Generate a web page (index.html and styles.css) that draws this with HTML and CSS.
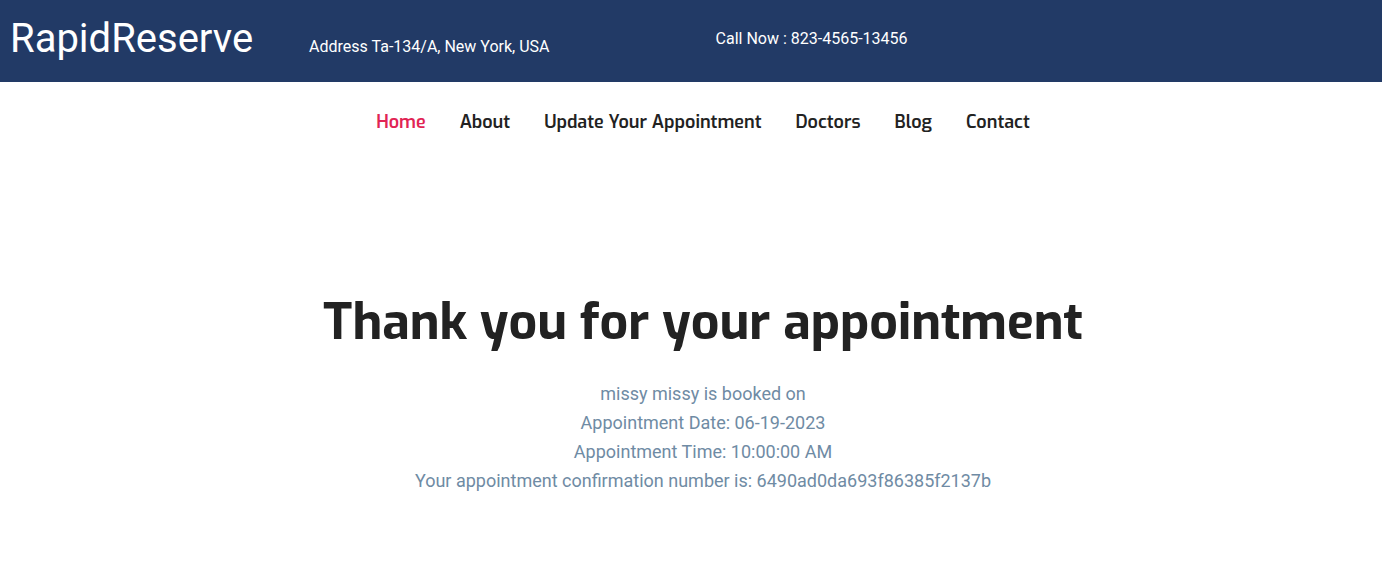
FILE: index.html
```
<!DOCTYPE html>
<html lang="en">
<head>
<meta charset="utf-8">
<meta name="viewport" content="width=device-width, initial-scale=1">
<title>RapidReserve</title>
<link rel="stylesheet" href="styles.css">
</head>
<body>
<header>
  <div class="topbar">
    <h1 class="brand">RapidReserve</h1>
    <p class="address">Address Ta-134/A, New York, USA</p>
    <p class="phone">Call Now : 823-4565-13456</p>
  </div>
  <nav class="nav">
    <a class="nav-link active" href="#">Home</a>
    <a class="nav-link" href="#">About</a>
    <a class="nav-link" href="#">Update Your Appointment</a>
    <a class="nav-link" href="#">Doctors</a>
    <a class="nav-link" href="#">Blog</a>
    <a class="nav-link" href="#">Contact</a>
  </nav>
</header>
<main class="confirmation">
  <h2 class="title">Thank you for your appointment</h2>
  <p class="line">missy missy is booked on</p>
  <p class="line">Appointment Date: 06-19-2023</p>
  <p class="line">Appointment Time: 10:00:00 AM</p>
  <p class="line">Your appointment confirmation number is: 6490ad0da693f86385f2137b</p>
</main>
</body>
</html>
```
FILE: styles.css
```
* { box-sizing: border-box; margin: 0; }
body {
  background: #fff;
  color: #222;
  font-family: Roboto, "Liberation Sans", sans-serif;
}
.topbar {
  display: flex;
  align-items: flex-start;
  padding: 15px 10px 19px;
  background: #223a66;
  color: #fff;
  font-size: 16px;
  line-height: 24px;
}
.brand { font-size: 40px; font-weight: 400; line-height: 48px; }
.address { margin-left: 56px; padding-top: 20px; }
.phone { margin-left: 166px; padding-top: 12px; }
.nav {
  display: flex;
  justify-content: center;
  gap: 34px;
  padding: 28px 0 28px 24px;
}
.nav-link {
  color: #222;
  font-family: Exo, "Exo 2", "Open Sans", sans-serif;
  font-size: 18px;
  font-weight: 600;
  line-height: 24px;
  text-decoration: none;
}
.active { color: #e12454; }
.confirmation {
  padding: 130px 0 80px 24px;
  text-align: center;
}
.title {
  margin-bottom: 27px;
  font-family: Exo, "Exo 2", "Open Sans", sans-serif;
  font-size: 50px;
  font-weight: 700;
  line-height: 60px;
}
.line { color: #6f8ba4; font-size: 18px; line-height: 29px; }
```
